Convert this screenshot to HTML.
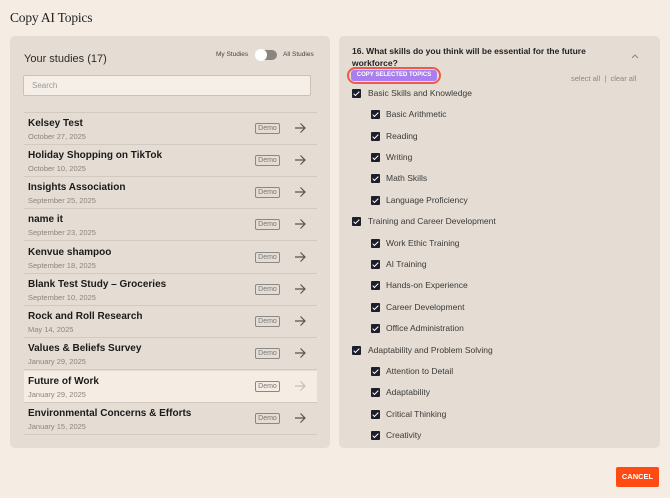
<!DOCTYPE html>
<html><head><style>
*{box-sizing:border-box;margin:0;padding:0}
body{width:670px;height:498px;background:#f5ede4;font-family:"Liberation Sans",sans-serif;position:relative;overflow:hidden;color:#1c1c1c}
.abs{position:absolute}
h1{position:absolute;left:10px;top:10px;font-family:"Liberation Serif",serif;font-size:13.5px;font-weight:normal;color:#222;letter-spacing:-0.2px}
.panel{position:absolute;background:#e5ddd3;border-radius:5px;top:36px;height:412px}
.row{position:absolute;left:24px;width:293px;height:32px;border-bottom:1px solid #d2cac0}
.row .t{position:absolute;left:4px;top:5px;font-size:10px;font-weight:bold;color:#1a1a1a}
.row .d{position:absolute;left:4px;top:19px;font-size:7.5px;color:#8a8580}
.row .demo{position:absolute;left:231px;top:10px;width:25px;height:11px;border:1px solid #888;border-radius:2px;font-size:7px;color:#777;text-align:center;line-height:9px}
.row svg{position:absolute;left:270px;top:9px}
.cb{position:absolute;width:9px;height:9px;background:#1c1f2a;border-radius:1px}
.cb:after{content:"";position:absolute;left:3px;top:1px;width:2px;height:5px;border:solid #fff;border-width:0 1.3px 1.3px 0;transform:rotate(45deg)}
.lb{position:absolute;font-size:8.5px;color:#3a3a3a}
</style></head><body>
<h1>Copy AI Topics</h1>
<div class="panel" style="left:10px;width:320px"></div>
<div class="abs" style="left:24px;top:53px;font-size:11px;color:#2a2a2a">Your studies (17)</div>
<div class="abs" style="left:216px;top:51px;font-size:6.5px;color:#444">My Studies</div>
<div class="abs" style="left:256px;top:50px;width:21px;height:10px;background:#8a8580;border-radius:5px"></div>
<div class="abs" style="left:255px;top:49px;width:12px;height:12px;background:#fff;border-radius:6px"></div>
<div class="abs" style="left:283px;top:51px;font-size:6.5px;color:#444">All Studies</div>
<div class="abs" style="left:23px;top:75px;width:288px;height:21px;background:#f5efe8;border:1px solid #c9c2b9;border-radius:2px;font-size:8px;color:#999;padding:5px 8px">Search</div>
<div class="abs" style="left:24px;top:112px;width:293px;border-top:1px solid #d2cac0"></div>
<svg width="0" height="0" style="position:absolute"><defs><g id="ar"><path d="M1 6H11M6.5 1.5L11 6L6.5 10.5" fill="none" stroke-width="1.2"/></g></defs></svg>
<div class="row" style="top:113px"><div class="t">Kelsey Test</div><div class="d">October 27, 2025</div><div class="demo">Demo</div><svg width="12" height="12" stroke="#555"><use href="#ar"/></svg></div>
<div class="row" style="top:145px"><div class="t">Holiday Shopping on TikTok</div><div class="d">October 10, 2025</div><div class="demo">Demo</div><svg width="12" height="12" stroke="#555"><use href="#ar"/></svg></div>
<div class="row" style="top:177px"><div class="t">Insights Association</div><div class="d">September 25, 2025</div><div class="demo">Demo</div><svg width="12" height="12" stroke="#555"><use href="#ar"/></svg></div>
<div class="row" style="top:209px"><div class="t">name it</div><div class="d">September 23, 2025</div><div class="demo">Demo</div><svg width="12" height="12" stroke="#555"><use href="#ar"/></svg></div>
<div class="row" style="top:242px"><div class="t">Kenvue shampoo</div><div class="d">September 18, 2025</div><div class="demo">Demo</div><svg width="12" height="12" stroke="#555"><use href="#ar"/></svg></div>
<div class="row" style="top:274px"><div class="t">Blank Test Study – Groceries</div><div class="d">September 10, 2025</div><div class="demo">Demo</div><svg width="12" height="12" stroke="#555"><use href="#ar"/></svg></div>
<div class="row" style="top:306px"><div class="t">Rock and Roll Research</div><div class="d">May 14, 2025</div><div class="demo">Demo</div><svg width="12" height="12" stroke="#555"><use href="#ar"/></svg></div>
<div class="row" style="top:338px"><div class="t">Values &amp; Beliefs Survey</div><div class="d">January 29, 2025</div><div class="demo">Demo</div><svg width="12" height="12" stroke="#555"><use href="#ar"/></svg></div>
<div class="row" style="top:371px;background:#f5ede4"><div class="t">Future of Work</div><div class="d">January 29, 2025</div><div class="demo">Demo</div><svg width="12" height="12" stroke="#c4beb8"><use href="#ar"/></svg></div>
<div class="row" style="top:403px"><div class="t">Environmental Concerns &amp; Efforts</div><div class="d">January 15, 2025</div><div class="demo">Demo</div><svg width="12" height="12" stroke="#555"><use href="#ar"/></svg></div>

<div class="panel" style="left:339px;width:321px"></div>
<div class="abs" style="left:352px;top:45px;width:260px;font-size:8.5px;font-weight:bold;line-height:12px;color:#222">16. What skills do you think will be essential for the future workforce?</div>
<svg class="abs" style="left:631px;top:53px" width="8" height="6"><path d="M1 5L4 2L7 5" fill="none" stroke="#888" stroke-width="1"/></svg>
<div class="abs" style="left:347px;top:67px;width:94px;height:17px;border:2px solid #f0584a;border-radius:9px"></div>
<div class="abs" style="left:351px;top:70px;width:86px;height:11px;background:#a97ef0;border-radius:3px;font-size:6px;font-weight:bold;color:#fff;text-align:center;line-height:11px">COPY SELECTED TOPICS</div>
<div class="abs" style="left:571px;top:74px;font-size:7.5px;color:#888">select all &nbsp;| &nbsp;clear all</div>

<div class="cb" style="left:352px;top:89px"></div><div class="lb" style="left:368px;top:88px">Basic Skills and Knowledge</div>
<div class="cb" style="left:371px;top:110px"></div><div class="lb" style="left:386px;top:109px">Basic Arithmetic</div>
<div class="cb" style="left:371px;top:132px"></div><div class="lb" style="left:386px;top:131px">Reading</div>
<div class="cb" style="left:371px;top:153px"></div><div class="lb" style="left:386px;top:152px">Writing</div>
<div class="cb" style="left:371px;top:174px"></div><div class="lb" style="left:386px;top:173px">Math Skills</div>
<div class="cb" style="left:371px;top:196px"></div><div class="lb" style="left:386px;top:195px">Language Proficiency</div>
<div class="cb" style="left:352px;top:217px"></div><div class="lb" style="left:368px;top:216px">Training and Career Development</div>
<div class="cb" style="left:371px;top:239px"></div><div class="lb" style="left:386px;top:238px">Work Ethic Training</div>
<div class="cb" style="left:371px;top:260px"></div><div class="lb" style="left:386px;top:259px">AI Training</div>
<div class="cb" style="left:371px;top:281px"></div><div class="lb" style="left:386px;top:280px">Hands-on Experience</div>
<div class="cb" style="left:371px;top:303px"></div><div class="lb" style="left:386px;top:302px">Career Development</div>
<div class="cb" style="left:371px;top:324px"></div><div class="lb" style="left:386px;top:323px">Office Administration</div>
<div class="cb" style="left:352px;top:346px"></div><div class="lb" style="left:368px;top:345px">Adaptability and Problem Solving</div>
<div class="cb" style="left:371px;top:367px"></div><div class="lb" style="left:386px;top:366px">Attention to Detail</div>
<div class="cb" style="left:371px;top:388px"></div><div class="lb" style="left:386px;top:387px">Adaptability</div>
<div class="cb" style="left:371px;top:410px"></div><div class="lb" style="left:386px;top:409px">Critical Thinking</div>
<div class="cb" style="left:371px;top:431px"></div><div class="lb" style="left:386px;top:430px">Creativity</div>

<div class="abs" style="left:616px;top:467px;width:43px;height:20px;background:#ff4a14;border-radius:2px;color:#fff;font-size:7.5px;font-weight:bold;text-align:center;line-height:20px">CANCEL</div>
</body></html>
